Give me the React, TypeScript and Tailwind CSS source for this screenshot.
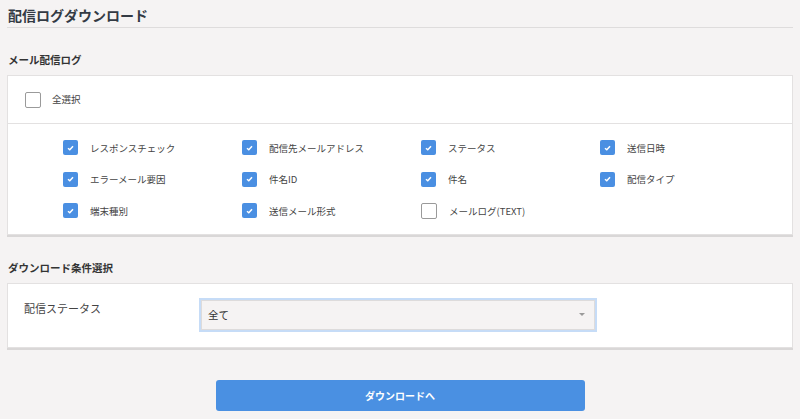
const items: { label: string; checked: boolean }[] = [
  { label: "レスポンスチェック", checked: true },
  { label: "配信先メールアドレス", checked: true },
  { label: "ステータス", checked: true },
  { label: "送信日時", checked: true },
  { label: "エラーメール要因", checked: true },
  { label: "件名ID", checked: true },
  { label: "件名", checked: true },
  { label: "配信タイプ", checked: true },
  { label: "端末種別", checked: true },
  { label: "送信メール形式", checked: true },
  { label: "メールログ(TEXT)", checked: false },
];

const Check = ({ checked }: { checked: boolean }) =>
  checked ? (
    <span className="w-[15px] h-[15px] shrink-0 rounded-[2px] bg-[#4a8fe2] flex items-center justify-center">
      <svg width="7" height="6" viewBox="0 0 7 6" fill="none">
        <path d="M1 3.2 L2.8 4.8 L6 1.2" stroke="#fff" strokeWidth="1.5" />
      </svg>
    </span>
  ) : (
    <span className="w-[16px] h-[16px] shrink-0 rounded-[2px] bg-white border border-[#9a9a9a]" />
  );

const App = () => {
  return (
    <div
      className="min-h-screen w-full bg-[#f5f3f3] px-[7px] text-[#444] select-none"
      style={{ fontFamily: '"Noto Sans CJK JP", "Noto Sans", sans-serif' }}
    >
      {/* title */}
      <h1 className="pt-[5px] pb-[2px] pl-px border-b border-[#dedcdc] text-[14px] leading-[20px] font-bold text-[#333a44]">
        配信ログダウンロード
      </h1>

      {/* mail log */}
      <h2 className="mt-[24px] pl-px text-[10.5px] leading-[16px] font-bold text-[#333]">
        メール配信ログ
      </h2>
      <div className="mt-[7px] bg-white border border-[#e3e1e1] shadow-[0_2px_0_#d9d7d7]">
        <div className="h-[48px] flex items-center pl-[17px] gap-[11px] border-b border-[#e3e1e1]">
          <Check checked={false} />
          <span className="text-[9.5px]">全選択</span>
        </div>
        <div className="pl-[55px] pt-[8px] pb-[7px] grid grid-cols-[repeat(4,179px)] auto-rows-[31.5px]">
          {items.map((it) => (
            <div key={it.label} className="flex items-center gap-[12px]">
              <Check checked={it.checked} />
              <span className="text-[9.5px] whitespace-nowrap">{it.label}</span>
            </div>
          ))}
        </div>
      </div>

      {/* download condition */}
      <h2 className="mt-[25px] pl-px text-[10.5px] leading-[16px] font-bold text-[#333]">
        ダウンロード条件選択
      </h2>
      <div className="mt-[7px] bg-white border border-[#e3e1e1] shadow-[0_2px_0_#d9d7d7] flex items-start pl-[16px] pt-[14px] pb-[15px]">
        <span className="w-[175px] mt-[2px] text-[11px] leading-[16px]">配信ステータス</span>
        <div className="w-[398px] h-[34px] border-2 border-[#c6dcf7] bg-[#f5f3f3] shadow-[inset_0_0_0_1px_#dddbdb] flex items-center justify-between pl-[7px] pr-[10px]">
          <span className="text-[10.5px] text-[#333]">全て</span>
          <span className="w-0 h-0 border-l-[3px] border-r-[3px] border-t-[3px] border-l-transparent border-r-transparent border-t-[#9a9a9a]" />
        </div>
      </div>

      {/* button */}
      <div className="flex justify-center pt-[32px] pb-[9px]">
        <button className="w-[369px] h-[31px] rounded-[3px] bg-[#4a90e2] text-white text-[10px] font-bold">
          ダウンロードへ
        </button>
      </div>
    </div>
  );
};

export default App;
